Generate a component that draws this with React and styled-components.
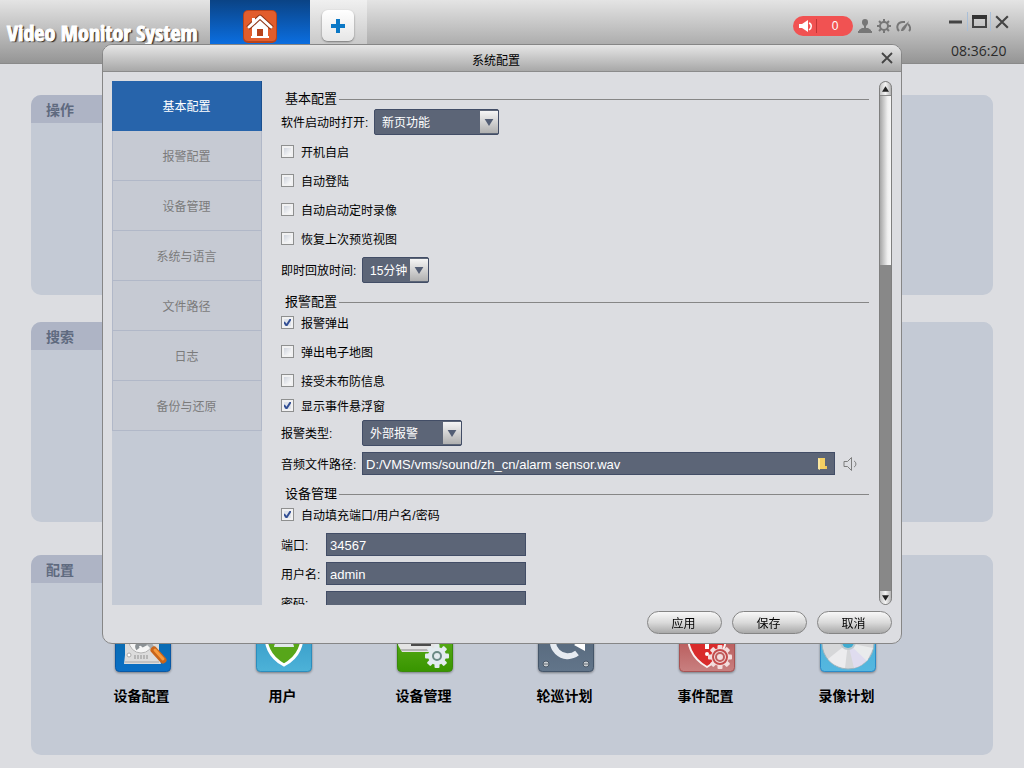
import React from "react";
import styled, { createGlobalStyle, css } from "styled-components";

const GlobalStyle = createGlobalStyle`
  * {
    box-sizing: border-box;
  }
  body {
    margin: 0;
    background: #dcdde1;
    color: #000000;
    font-family: "Liberation Sans", "Noto Sans CJK SC", sans-serif;
    font-size: 12px;
    line-height: 18px;
  }
  button,
  input,
  select {
    font: inherit;
    margin: 0;
  }
`;

/* ---------- top bar ---------- */

const TopBar = styled.header`
  display: flex;
  height: 64px;
  background: linear-gradient(#e4e4e4, #bdbdbd 50%, #959595);
  border-bottom: 1px solid #8a8a8a;
`;

const Logo = styled.h1`
  width: 210px;
  margin: 0;
  padding: 18px 0 0 7px;
  color: #ffffff;
  font-family: "Noto Sans ExtraCondensed", "Open Sans Condensed",
    "Roboto Condensed", "Liberation Sans Narrow", sans-serif;
  font-size: 22px;
  font-weight: 900;
  line-height: 28px;
  white-space: nowrap;
  -webkit-text-stroke: 1px #ffffff;
  text-shadow: 1px 1px 1px #222222, 2px 1px 1px #555555;
`;

const HomeTab = styled.button`
  display: flex;
  justify-content: center;
  width: 100px;
  padding: 9px 0 0;
  border: none;
  background: linear-gradient(#0a4385, #0b6ee0 70%);
`;

const NewTab = styled.div`
  width: 57px;
  padding: 10px 0 0 12px;
  background: linear-gradient(#f0f0f0, #b9b9b9);
`;

const AddButton = styled.button`
  display: flex;
  align-items: center;
  justify-content: center;
  width: 32px;
  height: 31px;
  padding: 0;
  border: none;
  border-radius: 6px;
  background: linear-gradient(#ffffff, #e6e6e6);
  box-shadow: 0 1px 2px #777777;
`;

const Tools = styled.div`
  display: flex;
  align-items: center;
  gap: 5px;
  height: 20px;
  margin: 16px 38px 0 auto;
`;

const AlarmPill = styled.button`
  display: flex;
  align-items: center;
  width: 60px;
  height: 20px;
  padding: 0 0 0 6px;
  border: none;
  border-radius: 10px;
  background: #f15252;
  color: #ffffff;

  span {
    flex: 1;
    margin-left: 3px;
    border-left: 1px solid #c23636;
    line-height: 14px;
  }
`;

const IconButton = styled.button`
  display: flex;
  align-items: center;
  justify-content: center;
  padding: 0;
  border: none;
  background: none;
  color: #777777;
`;

const WindowArea = styled.div`
  padding: 12px 15px 0 0;
`;

const WindowButtons = styled.div`
  display: flex;
  height: 19px;

  button {
    width: 23px;
  }
  button:first-child {
    width: 18px;
    justify-content: flex-start;
  }
  button:last-child {
    width: 19px;
    justify-content: flex-end;
  }
  button + button {
    border-left: 1px solid #a9bfd8;
  }
`;

const Clock = styled.time`
  display: block;
  margin-top: 10px;
  padding-left: 2px;
  color: #2a2a2a;
  font-family: "Open Sans", sans-serif;
  font-size: 14px;
  line-height: 20px;
`;

/* ---------- desktop panels ---------- */

const Desktop = styled.main`
  padding: 31px 31px 13px;
`;

const Panel = styled.section`
  min-height: 200px;
  margin-bottom: ${({ $gap }) => $gap || 0}px;
  border-radius: 10px;
  background: #c4cad5;
  overflow: hidden;
`;

const PanelTitle = styled.h2`
  height: 28px;
  margin: 0;
  padding: 0 15px;
  background: linear-gradient(90deg, #aeb4c5 10%, #c4cad5 85%);
  color: #5f6a7f;
  font-size: 14px;
  line-height: 30px;
`;

const AppGrid = styled.div`
  display: grid;
  grid-template-columns: repeat(6, 1fr);
  padding: 33px 75px 0 41px;
`;

const AppButton = styled.button`
  display: flex;
  flex-direction: column;
  align-items: center;
  gap: 14px;
  padding: 0;
  border: none;
  background: none;
  color: #000000;

  svg {
    filter: drop-shadow(0 1px 1px rgba(0, 0, 0, 0.4));
  }
  span {
    padding-right: 2px;
    font-size: 14px;
    font-weight: bold;
    line-height: 20px;
  }
`;

/* ---------- dialog ---------- */

const Overlay = styled.div`
  position: fixed;
  inset: 0;
  display: flex;
  padding: 44px 122px 124px 102px;
`;

const Dialog = styled.div`
  display: flex;
  flex: 1;
  flex-direction: column;
  min-width: 0;
  border: 1px solid #868686;
  border-radius: 10px;
  background: #dcdde1;
  overflow: hidden;
`;

const TitleBar = styled.div`
  display: flex;
  align-items: center;
  height: 27px;
  padding: 0 8px;
  border-bottom: 1px solid #8b8b8b;
  background: linear-gradient(#e6e6e6, #a8a8a8);

  h2 {
    flex: 1;
    margin: 0;
    padding-top: 6px;
    font-size: 12px;
    font-weight: normal;
    text-align: center;
  }
`;

const DialogBody = styled.div`
  display: flex;
  flex: 1;
  min-height: 0;
  padding: 9px 9px 0;
`;

const SideNav = styled.nav`
  display: flex;
  flex-direction: column;
  width: 150px;
  background: #c4cad5;
`;

const NavItem = styled.button`
  height: 50px;
  padding: 2px 1px 0 0;
  border: solid #b1b8c8;
  border-width: 0 1px 1px;
  background: #c6cad3;
  color: #7b7b7b;

  ${({ $active }) =>
    $active &&
    css`
      border-color: #2764ab;
      border-right-color: #1a4f8e;
      background: #2764ab;
      color: #ffffff;
    `}
`;

const Content = styled.div`
  flex: 1;
  min-width: 0;
  padding: 0 10px 0 19px;
  overflow: hidden;
`;

const SectionTitle = styled.h3`
  display: flex;
  align-items: center;
  gap: 2px;
  height: 18px;
  margin: ${({ $first }) => ($first ? 9 : 10)}px 0 0;
  padding-left: 4px;
  font-size: 13px;
  font-weight: normal;

  &::after {
    content: "";
    flex: 1;
    height: 1px;
    background: #868686;
  }
`;

const Stack = styled.div`
  display: flex;
  flex-direction: column;
  gap: ${({ $gap }) => $gap || 0}px;
  margin-top: ${({ $top }) => $top}px;
`;

const CheckLabel = styled.label`
  display: flex;
  align-items: center;
  gap: 7px;
  height: 17px;

  span {
    padding-top: 3px;
  }
`;

const CheckBox = styled.input`
  appearance: none;
  width: 13px;
  height: 13px;
  border: 1px solid #8e8f8f;
  background: linear-gradient(135deg, #c3c9d5, #fafafa 80%);
  box-shadow: inset 0 0 0 2px #f1f1f2;

  &:checked {
    background: url('data:image/svg+xml,<svg xmlns="http://www.w3.org/2000/svg" width="11" height="11"><path d="M2 5l2.5 3.500L9 1.500" fill="none" stroke="%23334f94" stroke-width="2"/></svg>')
        center no-repeat,
      #dfe3ea;
  }
`;

const Field = styled.div`
  display: flex;
  align-items: center;
  margin-top: ${({ $top }) => $top || 0}px;
  padding-right: 12px;

  label {
    width: ${({ $label }) => $label}px;
    padding-top: 2px;
  }
`;

const SelectBox = styled.div`
  display: grid;
  width: ${({ $width }) => $width}px;
  height: 26px;
  border: 1px solid #424d66;
  border-radius: 2px;
  background: #5c6577;

  > * {
    grid-area: 1 / 1;
  }
  select {
    appearance: none;
    width: 100%;
    padding: 2px 0 0 7px;
    border: none;
    background: none;
    color: #ffffff;
  }
  span {
    display: flex;
    align-items: center;
    justify-content: center;
    justify-self: end;
    width: 18px;
    margin: 1px 0;
    background: linear-gradient(#f5f5f5, #b0b0b0);
    pointer-events: none;
  }
`;

const TextInput = styled.input`
  width: ${({ $width }) => ($width ? `${$width}px` : "auto")};
  min-width: 0;
  height: 23px;
  padding: 2px 3px 0;
  border: 1px solid #424d66;
  background: #5c6577;
  color: #ffffff;
  font-size: 13px;
`;

const PathBox = styled.div`
  display: flex;
  flex: 1;
  align-items: center;
  height: 23px;
  margin-right: 8px;
  padding-right: 6px;
  border: 1px solid #424d66;
  background: #5c6577;

  input {
    flex: 1;
    height: 21px;
    border: none;
  }
`;

const ScrollBar = styled.div`
  display: flex;
  flex-direction: column;
  width: 13px;
  border: 1px solid #7f7f7f;
  border-radius: 7px;
  background: #888888;
  overflow: hidden;
`;

const ScrollArrow = styled.button`
  display: flex;
  align-items: center;
  justify-content: center;
  height: 13px;
  padding: 0;
  border: none;
  background: linear-gradient(90deg, #c4c4c4, #f4f4f4, #b4b4b4);
`;

const ScrollThumb = styled.div`
  height: 170px;
  margin-bottom: auto;
  border-top: 1px solid #8a8a8a;
  background: linear-gradient(90deg, #a6a6a6, #f0f0f0 70%, #f6f6f6);
`;

const Footer = styled.div`
  display: flex;
  justify-content: flex-end;
  gap: 10px;
  padding: 6px 9px 9px;
`;

const PillButton = styled.button`
  width: 75px;
  height: 23px;
  padding: 2px 2px 0 0;
  border: 1px solid #858585;
  border-radius: 12px;
  background: linear-gradient(#f8f8f8, #dadada 50%, #a9a9a9);
  color: #000000;
  line-height: 18px;
`;

/* ---------- icons ---------- */

const HomeIcon = () => (
  <svg width="34" height="35" viewBox="0 0 34 35">
    <rect x="0" y="1" width="34" height="33" rx="5" fill="#b8431b" />
    <rect x="1" y="2" width="32" height="30" rx="4" fill="#e25d2c" />
    <path d="M9 17v12h16V17l-8-7z" fill="#ffffff" />
    <path
      d="M5 19L17 8l12 11"
      fill="none"
      stroke="#8d3415"
      strokeWidth="5"
      strokeLinejoin="round"
    />
    <path
      d="M6 18L17 8l11 10"
      fill="none"
      stroke="#ffffff"
      strokeWidth="3"
      strokeLinecap="round"
      strokeLinejoin="round"
    />
    <path d="M9 9h3v4l-3 3z" fill="#ffffff" />
    <rect x="14" y="20" width="6" height="7" fill="#b8431b" />
    <path d="M8 28h18" stroke="#ffffff" strokeWidth="2" />
  </svg>
);

const HornIcon = () => (
  <svg width="14" height="12" viewBox="0 0 14 12">
    <path d="M0 4h3l6-4v12l-6-4H0z" fill="#ffffff" />
    <path d="M10 3c3 1 3 5 0 7" fill="none" stroke="#ffffff" strokeWidth="1.500" />
  </svg>
);

const UserIcon = () => (
  <svg width="14" height="14" viewBox="0 0 14 14" fill="currentColor">
    <path d="M7 0c2 0 3 1 3 3 0 1 0 2-1 3L8 7v2h2l3 2v1H1v-1l3-2h2V7L5 6C4 5 4 4 4 3c0-2 1-3 3-3z" />
    <path d="M0 12h14v2H0z" />
  </svg>
);

const teeth = [0, 45, 90, 135, 180, 225, 270, 315];

const GearIcon = () => (
  <svg width="14" height="14" viewBox="0 0 14 14">
    <circle cx="7" cy="7" r="4" fill="none" stroke="currentColor" strokeWidth="2" />
    {teeth.map((a) => (
      <rect
        key={a}
        x="6"
        y="0"
        width="2"
        height="3"
        fill="currentColor"
        transform={`rotate(${a} 7 7)`}
      />
    ))}
  </svg>
);

const GaugeIcon = () => (
  <svg width="15" height="14" viewBox="0 0 15 14" fill="none" stroke="currentColor">
    <path d="M3 12C0 9 1 3 7 3h2M13 12c2-2 1-5-1-7" strokeWidth="2" />
    <path d="M5 12c0-3 3-5 8-10-2 5-4 9-6 10z" fill="currentColor" stroke="none" />
  </svg>
);

const CloseIcon = ({ size }) => (
  <svg width={size} height={size} viewBox="0 0 12 12">
    <path d="M1 1l10 10M11 1L1 11" stroke="#444444" strokeWidth="1.800" />
  </svg>
);

const Arrow = ({ up, width = 10, height = 7, color = "#535e75" }) => (
  <svg width={width} height={height} viewBox="0 0 10 8" fill={color}>
    <path d={up ? "M0 8h10L5 0z" : "M0 0h10L5 8z"} />
  </svg>
);

const FolderIcon = () => (
  <svg width="11" height="14" viewBox="0 0 11 14">
    <path d="M1 1h7v8l2 1v2H1z" fill="#f3cf63" />
    <path d="M1 1l2 1v11l-2-1z" fill="#fbe7a0" />
    <path d="M8 9h2v3H8z" fill="#f0c65a" />
  </svg>
);

const SpeakerIcon = () => (
  <svg width="14" height="14" viewBox="0 0 14 14" fill="none" stroke="#7d7d7d">
    <path d="M1 4.500h3.500l4-4v13l-4-4H1z" />
    <path d="M11 4c2.500 1 2.500 5 0 6" />
  </svg>
);

const Tile = ({ id, from, to, edge, children }) => (
  <svg width="56" height="56" viewBox="0 0 56 56">
    <defs>
      <linearGradient id={id} x1="0" y1="0" x2="0" y2="1">
        <stop offset="0.4" stopColor={from} />
        <stop offset="1" stopColor={to} />
      </linearGradient>
    </defs>
    <rect x="0.500" y="0.500" width="55" height="55" rx="4" fill={`url(#${id})`} stroke={edge} />
    {children}
  </svg>
);

const Cog = ({ x, y, fill, ring }) => (
  <g transform={`translate(${x} ${y})`} fill={fill}>
    {teeth.map((a) => (
      <rect key={a} x="-2.500" y="-12" width="5" height="7" rx="1" transform={`rotate(${a})`} />
    ))}
    <circle r="9" />
    <circle r="4" fill="none" stroke={ring} strokeWidth="2" />
  </g>
);

const DeviceIcon = () => (
  <Tile id="device" from="#0a6cb0" to="#0a6fc6" edge="#0a58a4">
    <path d="M10 6h34v33l2 9H9l1-9z" fill="#dcdcdc" />
    <circle cx="26" cy="25" r="12" fill="#f5f5f5" stroke="#b2b2b2" />
    <path d="M23 33c-3-4 2-7 5-4l6-3" stroke="#8b9195" strokeWidth="4" fill="none" />
    <circle cx="14" cy="39" r="2" fill="#ffffff" stroke="#aaaaaa" />
    <path d="M20 39v4m3-4v4m3-4v4m3-4v4m3-4v4" stroke="#909090" />
    <path d="M10 46h34" stroke="#a8a8a8" />
    <path d="M30 24l9 9" stroke="#a9aeb2" strokeWidth="4" />
    <path d="M39 34l9 10" stroke="#c9651a" strokeWidth="7" strokeLinecap="round" />
    <path d="M40 34l8 9" stroke="#f79a3d" strokeWidth="3" strokeLinecap="round" />
  </Tile>
);

const ShieldUserIcon = () => (
  <Tile id="user" from="#3a9fca" to="#4db2d8" edge="#2c8dbd">
    <path
      d="M28 5l19 6c0 18-4 30-19 38C13 41 9 29 9 11z"
      fill="#57a61a"
      stroke="#ffffff"
      strokeWidth="3"
    />
    <circle cx="28" cy="18" r="6" fill="#f1f3f2" />
    <path d="M18 31c0-9 20-9 20 0z" fill="#e2e9ec" />
  </Tile>
);

const ManageIcon = () => (
  <Tile id="manage" from="#58ab18" to="#389500" edge="#398a0a">
    <path d="M5 8h36v28H5l-4-7z" fill="#e4e4e4" />
    <path d="M14 20h20v10H14z" fill="#4c4c4c" />
    <path d="M4 34h30" stroke="#b5b5b5" strokeWidth="2" />
    <Cog x={40} y={40} fill="#e3ebef" ring="#6b8a85" />
  </Tile>
);

const TourIcon = () => (
  <Tile id="tour" from="#586a7e" to="#62758a" edge="#45566a">
    <path
      d="M37 12A15 15 0 1 0 39 37"
      fill="none"
      stroke="#e6ebf1"
      strokeWidth="6"
    />
    <path d="M36 29l11-8v14z" fill="#ffffff" />
    {[8, 48].map((x) => (
      <g key={x}>
        <circle cx={x} cy="48" r="3" fill="#cbcfd3" stroke="#4a5868" />
        <path d={`M${x - 3} 48h6`} stroke="#626c76" />
      </g>
    ))}
  </Tile>
);

const EventIcon = () => (
  <Tile id="event" from="#b95a5a" to="#c88080" edge="#a75353">
    <path
      d="M28 5l20 6c0 18-4 31-20 40C12 42 8 29 8 11z"
      fill="#d92b2b"
      stroke="#f8f1f1"
      strokeWidth="2"
    />
    <path d="M28 14v19" stroke="#ffffff" strokeWidth="4" />
    <circle cx="28" cy="38" r="2" fill="#ffffff" />
    <Cog x={41} y={41} fill="#f3dddd" ring="#bf5e5e" />
    <circle cx="41" cy="41" r="7" fill="none" stroke="#c44c4c" strokeWidth="2" />
  </Tile>
);

const DiscIcon = () => (
  <Tile id="disc" from="#4cb2d8" to="#55b7e0" edge="#2b8bc8">
    <circle cx="28" cy="27" r="26" fill="#d6d7d9" stroke="#9fb4bd" />
    <path d="M28 27L8 43A26 26 0 0 0 25 52z" fill="#ececee" />
    <path d="M28 27l6 25a26 26 0 0 0 14-9z" fill="#dfdcef" />
    <path d="M28 27L53 32l-6 13z" fill="#e9ebec" />
    <circle cx="28" cy="26" r="8" fill="#bcc9cf" />
    <circle cx="28" cy="26" r="6" fill="#3fabd0" />
  </Tile>
);

/* ---------- data ---------- */

const navItems = [
  "基本配置",
  "报警配置",
  "设备管理",
  "系统与语言",
  "文件路径",
  "日志",
  "备份与还原",
];

const apps = [
  { label: "设备配置", Icon: DeviceIcon },
  { label: "用户", Icon: ShieldUserIcon },
  { label: "设备管理", Icon: ManageIcon },
  { label: "轮巡计划", Icon: TourIcon },
  { label: "事件配置", Icon: EventIcon },
  { label: "录像计划", Icon: DiscIcon },
];

const Check = ({ label, checked }) => (
  <CheckLabel>
    <CheckBox type="checkbox" defaultChecked={checked} />
    <span>{label}</span>
  </CheckLabel>
);

const Select = ({ id, value, width }) => (
  <SelectBox $width={width}>
    <select id={id} defaultValue={value}>
      <option>{value}</option>
    </select>
    <span>
      <Arrow />
    </span>
  </SelectBox>
);

const SettingsDialog = () => (
  <Dialog role="dialog" aria-labelledby="dialog-title">
    <TitleBar>
      <h2 id="dialog-title">系统配置</h2>
      <IconButton aria-label="关闭">
        <CloseIcon size={12} />
      </IconButton>
    </TitleBar>
    <DialogBody>
      <SideNav>
        {navItems.map((item, i) => (
          <NavItem key={item} $active={i === 0}>
            {item}
          </NavItem>
        ))}
      </SideNav>
      <Content>
        <SectionTitle $first>基本配置</SectionTitle>
        <Field $label={93} $top={1}>
          <label htmlFor="startup">软件启动时打开:</label>
          <Select id="startup" value="新页功能" width={125} />
        </Field>
        <Stack $gap={12} $top={8}>
          <Check label="开机自启" />
          <Check label="自动登陆" />
          <Check label="自动启动定时录像" />
          <Check label="恢复上次预览视图" />
        </Stack>
        <Field $label={81} $top={10}>
          <label htmlFor="playback">即时回放时间:</label>
          <Select id="playback" value="15分钟" width={67} />
        </Field>

        <SectionTitle>报警配置</SectionTitle>
        <Stack $gap={12} $top={3}>
          <Check label="报警弹出" checked />
          <Check label="弹出电子地图" />
          <Check label="接受未布防信息" />
        </Stack>
        <Stack $top={8}>
          <Check label="显示事件悬浮窗" checked />
        </Stack>
        <Field $label={81} $top={6}>
          <label htmlFor="alarm-type">报警类型:</label>
          <Select id="alarm-type" value="外部报警" width={100} />
        </Field>
        <Field $label={81} $top={6}>
          <label htmlFor="audio">音频文件路径:</label>
          <PathBox>
            <TextInput
              id="audio"
              defaultValue="D:/VMS/vms/sound/zh_cn/alarm sensor.wav"
            />
            <IconButton aria-label="浏览">
              <FolderIcon />
            </IconButton>
          </PathBox>
          <IconButton aria-label="试听">
            <SpeakerIcon />
          </IconButton>
        </Field>

        <SectionTitle>设备管理</SectionTitle>
        <Stack $top={3}>
          <Check label="自动填充端口/用户名/密码" checked />
        </Stack>
        <Stack $gap={6} $top={10}>
          <Field $label={45}>
            <label htmlFor="port">端口:</label>
            <TextInput id="port" defaultValue="34567" $width={200} />
          </Field>
          <Field $label={45}>
            <label htmlFor="user">用户名:</label>
            <TextInput id="user" defaultValue="admin" $width={200} />
          </Field>
          <Field $label={45}>
            <label htmlFor="password">密码:</label>
            <TextInput id="password" type="password" $width={200} />
          </Field>
        </Stack>
      </Content>
      <ScrollBar>
        <ScrollArrow aria-label="向上">
          <Arrow up width={7} height={6} color="#222222" />
        </ScrollArrow>
        <ScrollThumb />
        <ScrollArrow aria-label="向下">
          <Arrow width={7} height={6} color="#222222" />
        </ScrollArrow>
      </ScrollBar>
    </DialogBody>
    <Footer>
      <PillButton>应用</PillButton>
      <PillButton>保存</PillButton>
      <PillButton>取消</PillButton>
    </Footer>
  </Dialog>
);

const App = () => {
  return (
    <>
      <GlobalStyle />
      <TopBar>
        <Logo>Video Monitor System</Logo>
        <HomeTab aria-label="主页">
          <HomeIcon />
        </HomeTab>
        <NewTab>
          <AddButton aria-label="新建">
            <svg width="14" height="14" viewBox="0 0 14 14">
              <path d="M7 0v14M0 7h14" stroke="#0b78c6" strokeWidth="4" />
            </svg>
          </AddButton>
        </NewTab>
        <Tools>
          <AlarmPill>
            <HornIcon />
            <span>0</span>
          </AlarmPill>
          <IconButton aria-label="用户">
            <UserIcon />
          </IconButton>
          <IconButton aria-label="设置">
            <GearIcon />
          </IconButton>
          <IconButton aria-label="性能">
            <GaugeIcon />
          </IconButton>
        </Tools>
        <WindowArea>
          <WindowButtons>
            <IconButton aria-label="最小化">
              <svg width="13" height="13">
                <path d="M0 7h13" stroke="#444444" strokeWidth="3" />
              </svg>
            </IconButton>
            <IconButton aria-label="最大化">
              <svg width="15" height="13">
                <path d="M1 1h13v11H1z" fill="none" stroke="#444444" strokeWidth="2" />
                <path d="M0 2h15" stroke="#333333" strokeWidth="4" />
              </svg>
            </IconButton>
            <IconButton aria-label="关闭窗口">
              <CloseIcon size={14} />
            </IconButton>
          </WindowButtons>
          <Clock>08:36:20</Clock>
        </WindowArea>
      </TopBar>
      <Desktop>
        <Panel $gap={27}>
          <PanelTitle>操作</PanelTitle>
        </Panel>
        <Panel $gap={33}>
          <PanelTitle>搜索</PanelTitle>
        </Panel>
        <Panel>
          <PanelTitle>配置</PanelTitle>
          <AppGrid>
            {apps.map(({ label, Icon }) => (
              <AppButton key={label}>
                <Icon />
                <span>{label}</span>
              </AppButton>
            ))}
          </AppGrid>
        </Panel>
      </Desktop>
      <Overlay>
        <SettingsDialog />
      </Overlay>
    </>
  );
};

export default App;
